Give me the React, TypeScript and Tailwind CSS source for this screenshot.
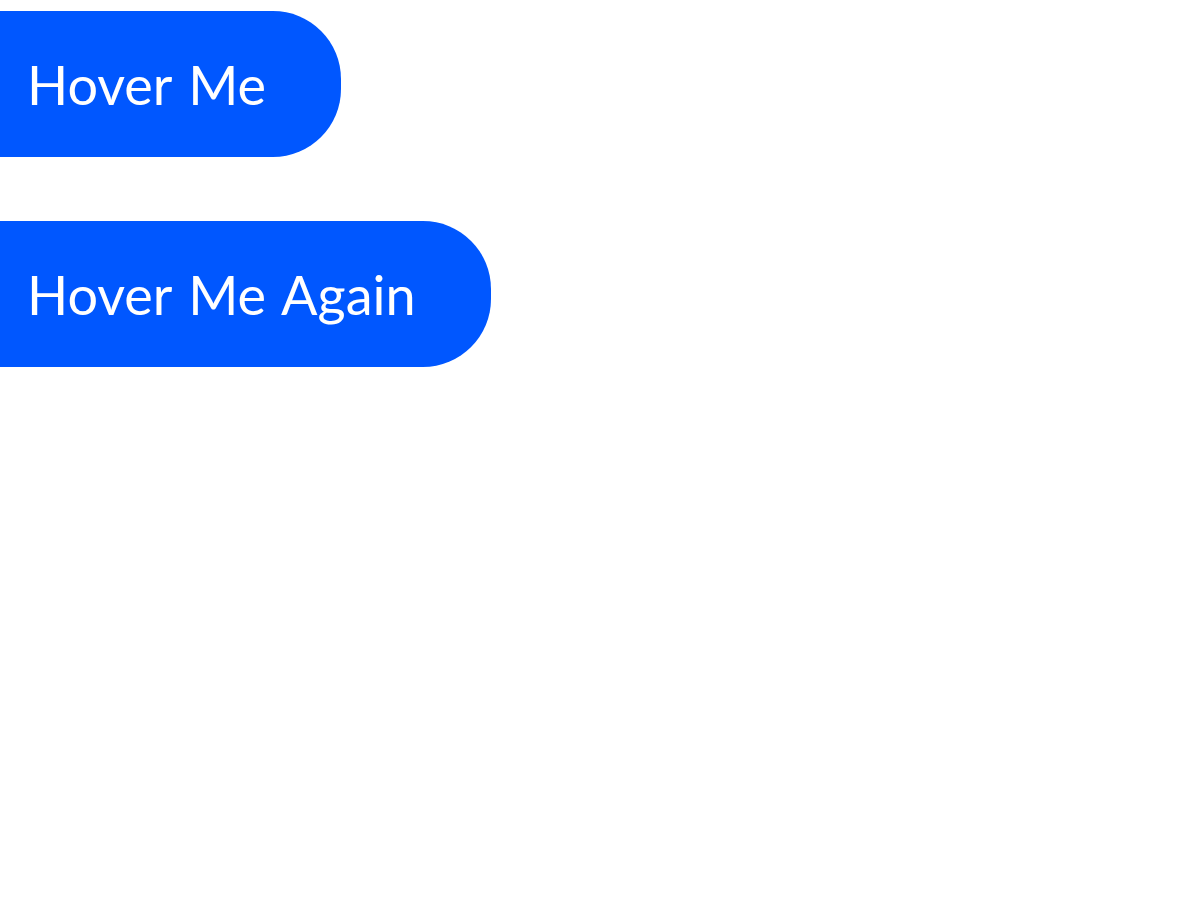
const buttons = ['Hover Me', 'Hover Me Again'];

export default function App() {
    return (
        <div className="min-h-[900px] w-[1200px] bg-white pt-[11px]">
            <div className="flex flex-col items-start gap-[64px]">
                {buttons.map((label) => (
                    <button
                        key={label}
                        className="flex h-[146px] items-center rounded-r-[68px] bg-[#0057ff] pl-[27px] pr-[75px] pt-[2px] text-[54px] leading-none text-white [word-spacing:3px]"
                        style={{ fontFamily: 'Lato, "Open Sans", sans-serif' }}
                    >
                        {label}
                    </button>
                ))}
            </div>
        </div>
    );
}
